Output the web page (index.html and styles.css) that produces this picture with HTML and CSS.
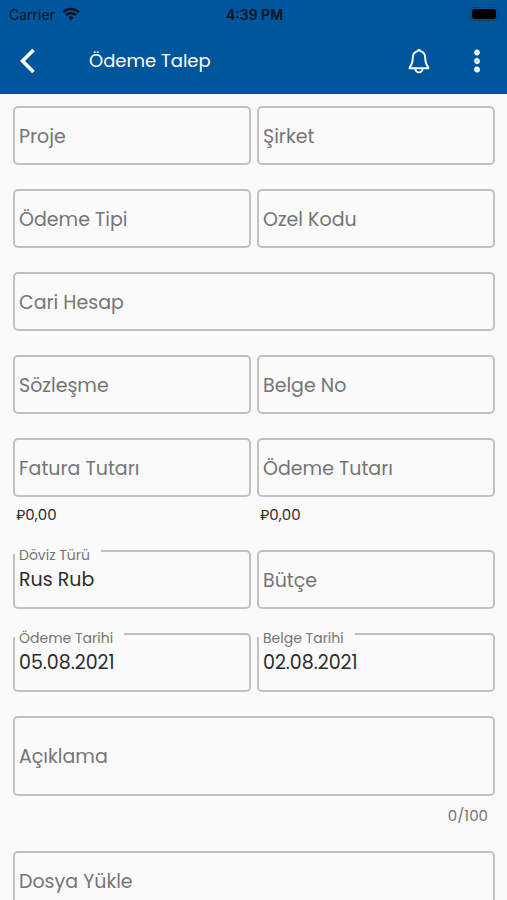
FILE: index.html
```html
<!DOCTYPE html>
<html lang="tr">
<head>
<meta charset="utf-8">
<meta name="viewport" content="width=device-width, initial-scale=1">
<title>Ödeme Talep</title>
<link rel="stylesheet" href="styles.css">
</head>
<body>
<header class="header">
  <div class="status">
    <div class="carrier">
      <span>Carrier</span>
      <svg class="wifi" viewBox="0 0 18 14" aria-hidden="true">
        <path d="M1.2 5.2a11.2 11.2 0 0 1 15.6 0M4 8.2a7.2 7.2 0 0 1 10 0" fill="none" stroke="currentColor" stroke-width="2.4"/>
        <path d="M9 13.4 6.2 10.5a4 4 0 0 1 5.6 0z" fill="currentColor"/>
      </svg>
    </div>
    <time class="clock">4:39 PM</time>
    <svg class="battery" viewBox="0 0 30 14" aria-hidden="true">
      <rect x="0.5" y="0.5" width="27" height="13" rx="4" fill="none" stroke="#034378"/>
      <rect x="2" y="2" width="24" height="10" rx="2.5" fill="currentColor"/>
      <path d="M28.500 5v4q1.400-.5 1.400-2t-1.400-2z" fill="#034378"/>
    </svg>
  </div>
  <div class="toolbar">
    <button class="icon-button" type="button" aria-label="Geri">
      <svg class="back" viewBox="0 0 16 26" aria-hidden="true"><path d="M13.5 2 2.5 13l11 11" fill="none" stroke="currentColor" stroke-width="3.6"/></svg>
    </button>
    <h1 class="title">Ödeme Talep</h1>
    <button class="icon-button" type="button" aria-label="Bildirimler">
      <svg class="bell" viewBox="0 0 22 26" aria-hidden="true">
        <g fill="none" stroke="currentColor" stroke-width="1.9" stroke-linejoin="round" stroke-linecap="round">
          <path d="M11 2C10.200 2 9.800 2.600 9.600 3.200 6.600 4 4.900 6.500 4.800 9.600 4.600 14.500 4 16.500 2.200 18.400L1.600 20.300h18.800L19.800 18.400C18 16.500 17.400 14.500 17.200 9.600 17.100 6.500 15.400 4 12.400 3.200 12.200 2.600 11.800 2 11 2z"/>
          <path d="M7.400 21a3.600 3.400 0 0 0 7.200 0"/>
        </g>
      </svg>
    </button>
    <button class="icon-button" type="button" aria-label="Menü">
      <svg class="more" viewBox="0 0 8 24" aria-hidden="true">
        <g fill="#b5d2ea" stroke="currentColor" stroke-width="1.800"><circle cx="4" cy="3.500" r="2"/><circle cx="4" cy="12" r="2"/><circle cx="4" cy="20.500" r="2"/></g>
      </svg>
    </button>
  </div>
</header>
<main>
  <form class="form">
    <div class="field"><input id="proje" type="text"><label for="proje">Proje</label></div>
    <div class="field"><input id="sirket" type="text"><label for="sirket">Şirket</label></div>
    <div class="field"><input id="tip" type="text"><label for="tip">Ödeme Tipi</label></div>
    <div class="field"><input id="kod" type="text"><label for="kod">Ozel Kodu</label></div>
    <div class="field wide"><input id="cari" type="text"><label for="cari">Cari Hesap</label></div>
    <div class="field"><input id="sozlesme" type="text"><label for="sozlesme">Sözleşme</label></div>
    <div class="field"><input id="belge" type="text"><label for="belge">Belge No</label></div>
    <div class="group">
      <div class="field"><input id="fatura" type="text"><label for="fatura">Fatura Tutarı</label></div>
      <p class="helper">₽0,00</p>
    </div>
    <div class="group">
      <div class="field"><input id="tutar" type="text"><label for="tutar">Ödeme Tutarı</label></div>
      <p class="helper">₽0,00</p>
    </div>
    <div class="field filled"><input id="doviz" type="text" value="Rus Rub"><label for="doviz">Döviz Türü</label></div>
    <div class="field"><input id="butce" type="text"><label for="butce">Bütçe</label></div>
    <div class="field filled"><input id="odeme-tarihi" type="text" value="05.08.2021"><label for="odeme-tarihi">Ödeme Tarihi</label></div>
    <div class="field filled"><input id="belge-tarihi" type="text" value="02.08.2021"><label for="belge-tarihi">Belge Tarihi</label></div>
    <div class="group wide">
      <div class="field"><textarea id="aciklama" maxlength="100"></textarea><label for="aciklama">Açıklama</label></div>
      <p class="helper counter">0/100</p>
    </div>
    <div class="field wide"><input id="dosya" type="text"><label for="dosya">Dosya Yükle</label></div>
  </form>
</main>
</body>
</html>
```
FILE: styles.css
```css
:root {
  --blue: #00569c;
  --page: #fafafa;
  --line: #c0c0c0;
  --label: #757575;
}

* { box-sizing: border-box; }

html { scrollbar-width: none; }

body {
  margin: 0;
  background: var(--page);
  color: #2c2c2c;
  font-family: Poppins, Inter, sans-serif;
}

.header { background: var(--blue); }

.status {
  display: grid;
  grid-template-columns: 1fr auto 1fr;
  align-items: center;
  height: 28px;
  padding: 0 7px 0 9px;
  color: #061423;
  font-family: Inter, sans-serif;
  font-size: 14px;
}

.carrier { display: flex; align-items: center; gap: 7px; }
.wifi { width: 18px; height: 14px; }
.clock { font-weight: 600; }
.battery { width: 30px; height: 14px; justify-self: end; color: #000; }

.toolbar {
  display: flex;
  align-items: center;
  gap: 14px;
  height: 66px;
  padding: 0 8px 1px 6px;
  color: #fff;
}

.icon-button {
  display: grid;
  place-items: center;
  width: 44px;
  height: 44px;
  padding: 0;
  border: 0;
  background: none;
  color: inherit;
}

.back { width: 16px; height: 26px; }
.bell { width: 22px; height: 26px; }
.more { width: 8px; height: 24px; }

.title {
  flex: 1;
  margin: 0;
  padding-left: 25px;
  font-size: 18px;
  font-weight: 400;
}

.form {
  display: grid;
  grid-template-columns: 1fr 1fr;
  gap: 24px 6px;
  padding: 12px 12px 24px 13px;
}

.wide { grid-column: 1 / -1; }

.field {
  position: relative;
  display: grid;
  align-items: center;
}

.field > * { grid-area: 1 / 1; }

.field input,
.field textarea {
  display: block;
  width: 100%;
  min-width: 0;
  height: 59px;
  padding: 0 4px;
  border: 2px solid var(--line);
  border-radius: 5px;
  background: none;
  color: inherit;
  font: inherit;
  font-size: 19px;
  outline: none;
  resize: none;
}

.field textarea { height: 80px; padding-top: 26px; }

.field label {
  padding: 2px 6px 0;
  color: var(--label);
  font-size: 19px;
  line-height: 24px;
  pointer-events: none;
}

.filled label {
  position: absolute;
  top: -6px;
  left: 0;
  padding: 0 11px 0 6px;
  background: linear-gradient(var(--page), var(--page)) no-repeat 0 0 / 100% 10px;
  font-size: 14px;
  line-height: 22px;
}

.helper {
  margin: 0;
  padding: 7px 3px 1px;
  font-size: 15px;
  line-height: 21px;
}

.counter {
  padding: 9px 7px 1px;
  color: var(--label);
  text-align: right;
}
```
